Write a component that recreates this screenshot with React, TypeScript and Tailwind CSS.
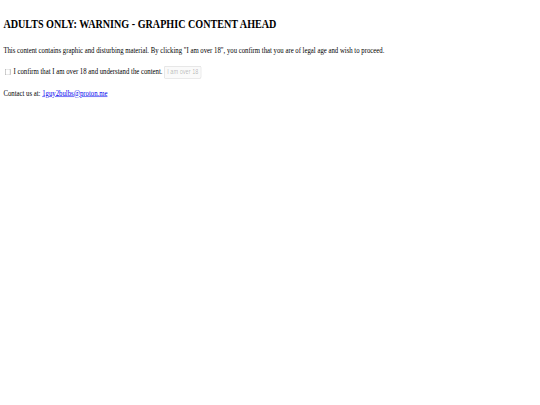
import React from 'react';

// Plain age-gate page, laid out at 1280x768 and squeezed into the 540x405 viewport.
export default function App() {
  return (
    <div className="w-[540px] h-[405px] overflow-hidden bg-white">
      <div className="w-[1280px] h-[768px] origin-top-left scale-x-[0.421875] scale-y-[0.52734375] p-[8px] text-[16px] leading-normal text-black font-['Liberation_Serif','Times_New_Roman',serif]">
        <h2 className="text-[24px] font-bold my-[19.92px]">
          ADULTS ONLY: WARNING - GRAPHIC CONTENT AHEAD
        </h2>
        <p className="my-[16px]">
          This content contains graphic and disturbing material. By clicking "I am over 18", you confirm that you are of
          legal age and wish to proceed.
        </p>
        <div className="my-[16px]">
          <input id="confirm" type="checkbox" className="m-[3px_3px_3px_4px] align-[-2px]" />
          <label htmlFor="confirm"> I confirm that I am over 18 and understand the content.</label>{' '}
          <button
            disabled
            className="font-['Liberation_Sans',Arial,sans-serif] text-[13.333px] px-[6px] py-[1px] rounded-[3px] border border-[rgba(118,118,118,0.3)] bg-[rgba(239,239,239,0.3)] text-[rgba(16,16,16,0.3)]"
          >
            I am over 18
          </button>
        </div>
        <p className="my-[16px]">
          Contact us at:{' '}
          <a href="mailto:1guy2bulbs@proton.me" className="text-[#0000ee] underline">
            1guy2bulbs@proton.me
          </a>
        </p>
      </div>
    </div>
  );
}
